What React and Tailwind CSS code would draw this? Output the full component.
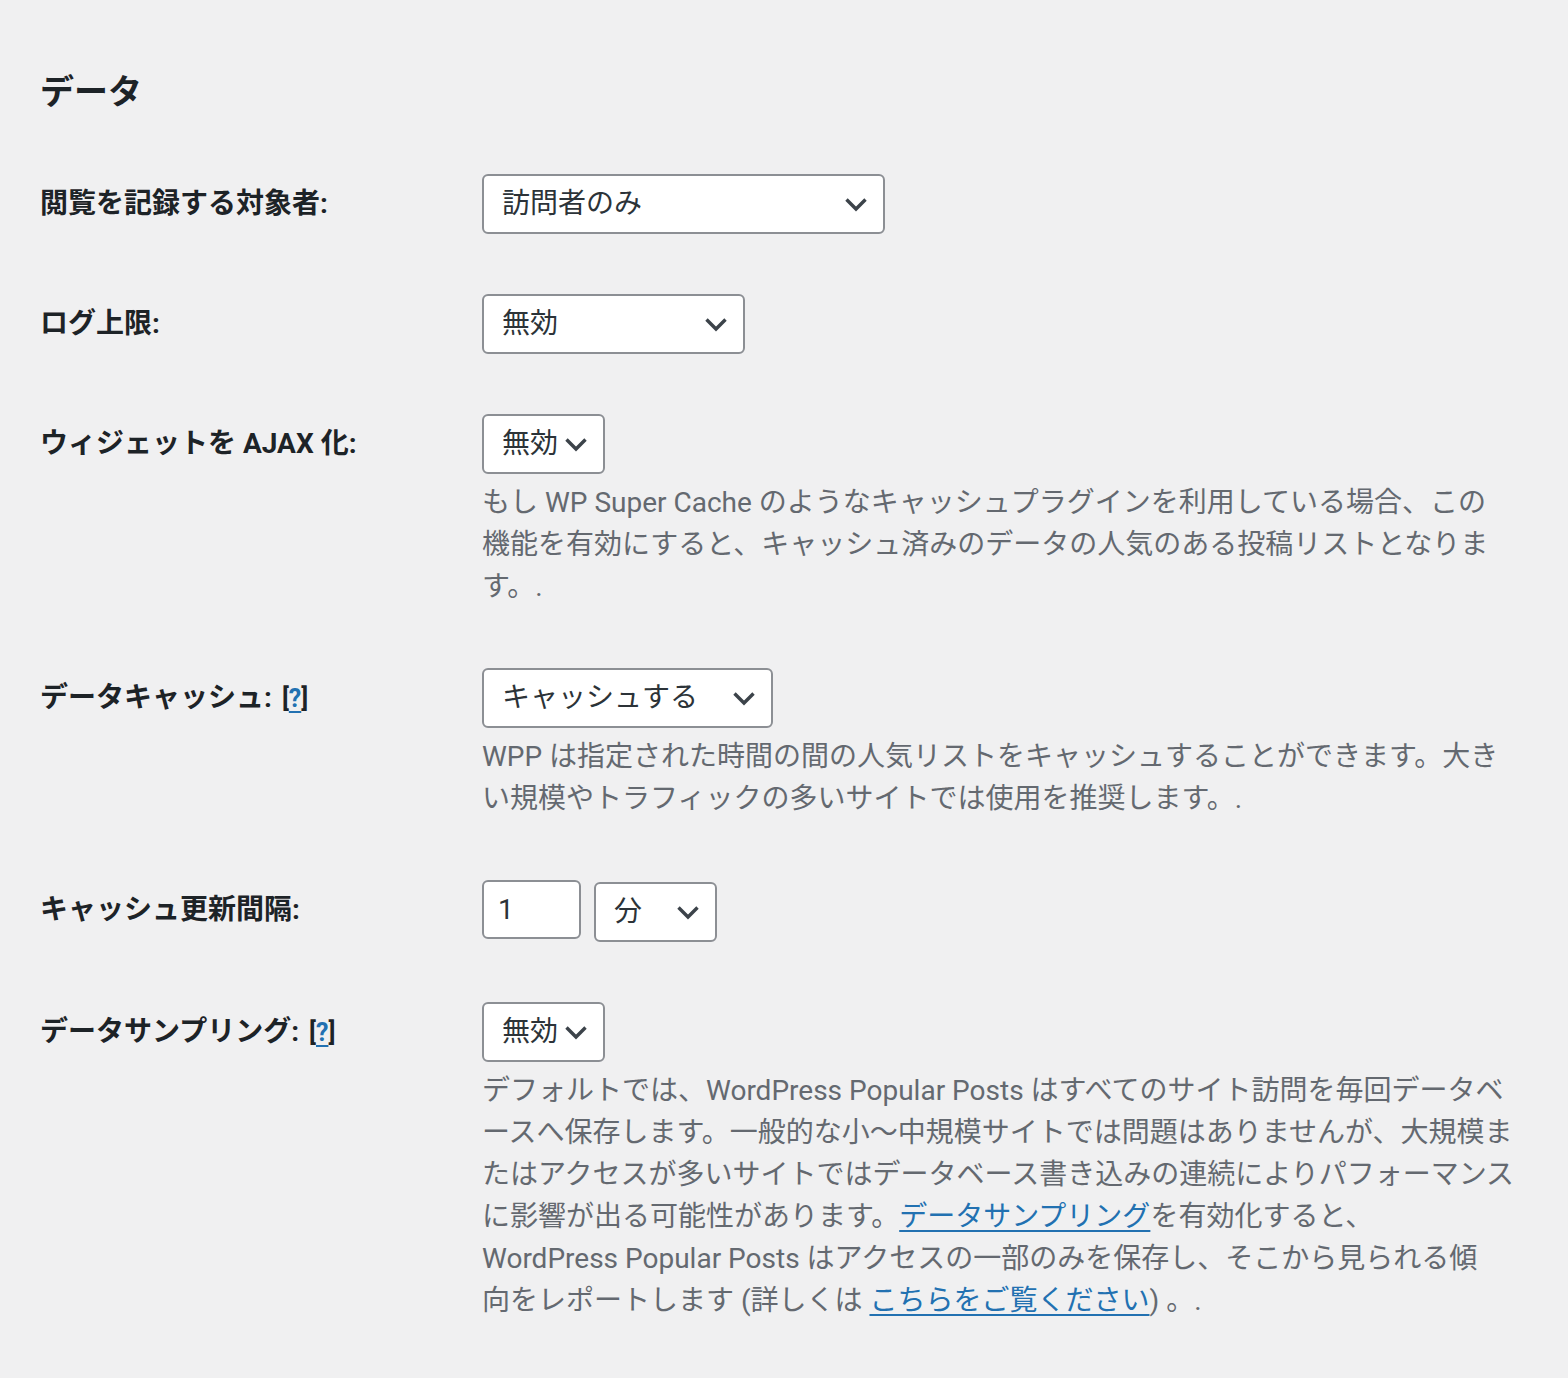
import React from "react";

const font = "font-['Roboto','Noto_Sans_CJK_JP',sans-serif]";

function Chevron() {
  return (
    <svg width="24" height="24" viewBox="0 0 24 24" fill="none" className="shrink-0">
      <path d="M2.5 7.5l9.5 9.5 9.5-9.5" stroke="#3c434a" strokeWidth="3.4" />
    </svg>
  );
}

function Select({ value, width, className = "" }) {
  return (
    <div
      className={`${width} ${className} h-[60px] bg-white border-2 border-[#8c8f94] rounded-[6px] flex items-center justify-between pl-[18px] pr-[15px] text-[28px] text-[#2c3338]`}
    >
      <span>{value}</span>
      <Chevron />
    </div>
  );
}

function Help() {
  return (
    <span className="text-[25px] ml-[10px]">
      [<a href="#" className="text-[#2271b1] underline underline-offset-4">?</a>]
    </span>
  );
}

function Row({ label, children }) {
  return (
    <div className="flex">
      <div className="w-[420px] shrink-0 pt-[42px] text-[28px] leading-[36px] font-bold text-[#1d2327]">
        {label}
      </div>
      <div className="flex-1 py-[30px] pl-[22px]">{children}</div>
    </div>
  );
}

function Desc({ children }) {
  return (
    <p className="mt-[8px] max-w-[1060px] text-[28px] leading-[42px] text-[#646970]">
      {children}
    </p>
  );
}

export default function App() {
  return (
    <div className={`min-h-screen bg-[#f0f0f1] px-[40px] pt-[70px] pb-[40px] ${font}`}>
      <h2 className="text-[34px] leading-[44px] font-bold text-[#1d2327] mb-[30px]">データ</h2>

      <Row label="閲覧を記録する対象者:">
        <Select value="訪問者のみ" width="w-[403px]" />
      </Row>

      <Row label="ログ上限:">
        <Select value="無効" width="w-[263px]" />
      </Row>

      <Row label="ウィジェットを AJAX 化:">
        <Select value="無効" width="w-[123px]" />
        <Desc>
          もし WP Super Cache のようなキャッシュプラグインを利用している場合、この
          <br />
          機能を有効にすると、キャッシュ済みのデータの人気のある投稿リストとなりま
          <br />
          す。.
        </Desc>
      </Row>

      <Row
        label={
          <>
            データキャッシュ:<Help />
          </>
        }
      >
        <Select value="キャッシュする" width="w-[291px]" />
        <Desc>
          WPP は指定された時間の間の人気リストをキャッシュすることができます。大き
          <br />
          い規模やトラフィックの多いサイトでは使用を推奨します。.
        </Desc>
      </Row>

      <Row label="キャッシュ更新間隔:">
        <div className="flex items-start">
          <div className="w-[99px] h-[59px] bg-white border-2 border-[#8c8f94] rounded-[6px] flex items-center pl-[14px] text-[28px] text-[#2c3338]">
            1
          </div>
          <Select value="分" width="w-[123px]" className="ml-[13px] mt-[2px]" />
        </div>
      </Row>

      <Row
        label={
          <>
            データサンプリング:<Help />
          </>
        }
      >
        <Select value="無効" width="w-[123px]" />
        <Desc>
          デフォルトでは、WordPress Popular Posts はすべてのサイト訪問を毎回データベ
          <br />
          ースへ保存します。一般的な小〜中規模サイトでは問題はありませんが、大規模ま
          <br />
          たはアクセスが多いサイトではデータベース書き込みの連続によりパフォーマンス
          <br />
          に影響が出る可能性があります。
          <a href="#" className="text-[#2271b1] underline underline-offset-4">データサンプリング</a>
          を有効化すると、
          <br />
          WordPress Popular Posts はアクセスの一部のみを保存し、そこから見られる傾
          <br />
          向をレポートします (詳しくは{" "}
          <a href="#" className="text-[#2271b1] underline underline-offset-4">こちらをご覧ください</a>) 。.
        </Desc>
      </Row>
    </div>
  );
}
